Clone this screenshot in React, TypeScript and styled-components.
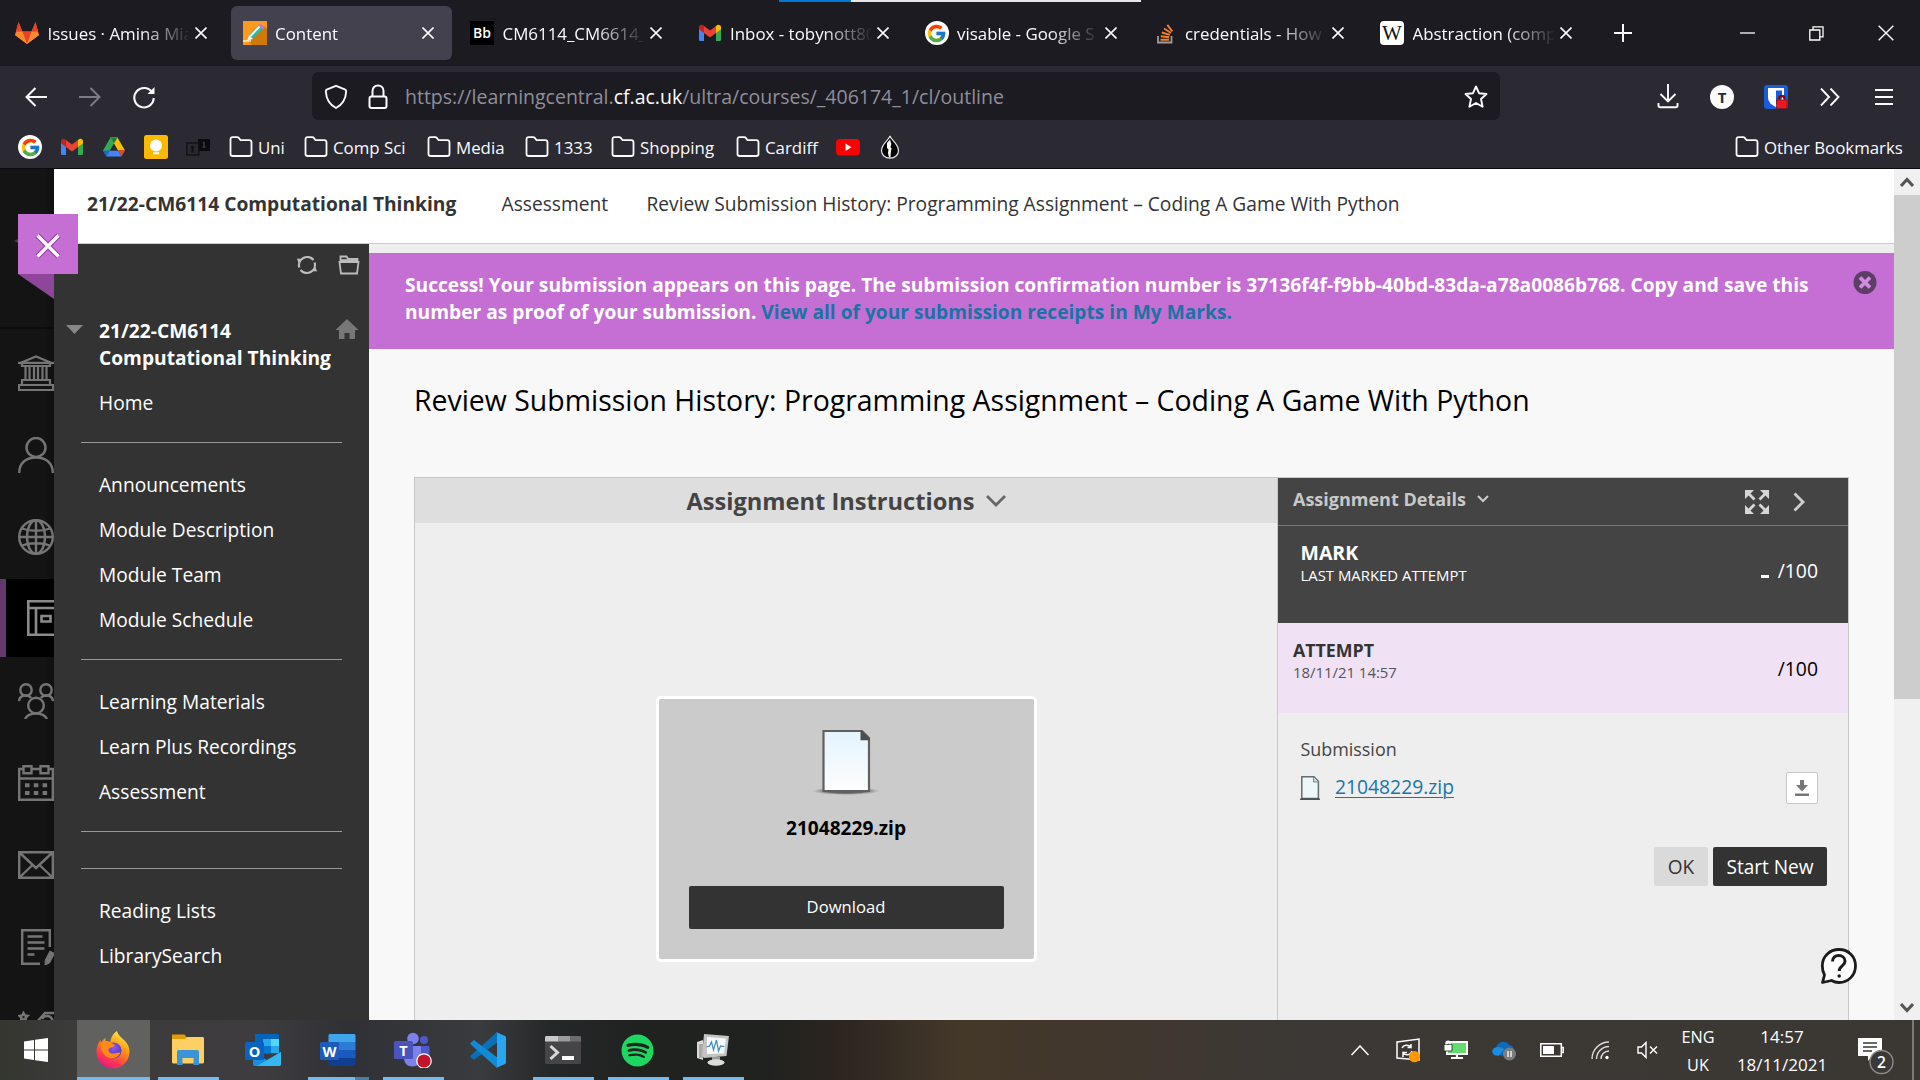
import React from 'react';
import styled, { createGlobalStyle, css } from 'styled-components';
import { FcGoogle } from 'react-icons/fc';
import { FaSpotify } from 'react-icons/fa';

const Global = createGlobalStyle`
  * { box-sizing: border-box; }
  html, body { margin: 0; padding: 0; overflow: hidden; background: #000; }
  body { font-family: "Open Sans", "Noto Sans", sans-serif; }
  svg { display: block; flex: none; }
`;

const Screen = styled.div`
  width: 1920px;
  height: 1080px;
  display: flex;
  flex-direction: column;
  overflow: hidden;
`;

/* ---------- browser chrome ---------- */

const TabBar = styled.div`
  position: relative;
  height: 66px;
  flex: none;
  display: flex;
  align-items: center;
  background: #1c1b22;
`;

const LoadStrip = styled.div`
  position: absolute;
  top: 0;
  left: 779px;
  width: 362px;
  height: 2px;
  background: linear-gradient(to right, #0078d7 72px, #e6e6e6 72px);
`;

const Tab = styled.div<{ $active?: boolean }>`
  width: 221.5px;
  height: 54px;
  margin: 0 3px;
  padding: 0 17px 0 12px;
  display: flex;
  align-items: center;
  border-radius: 6px;
  background: ${(p) => (p.$active ? '#42414d' : 'transparent')};
`;

const TabLabel = styled.span`
  width: 145px;
  margin-left: 8.500px;
  padding-top: 1px;
  overflow: hidden;
  white-space: nowrap;
  color: #fbfbfe;
  font-size: 16.9px;
  line-height: 26px;
  mask-image: linear-gradient(to right, #000 92px, transparent 143px);
`;

const TabClose = styled.span`
  margin-left: auto;
  margin-right: -5px;
  width: 24px;
  display: flex;
  justify-content: center;
`;

const PlusCell = styled.span`
  width: 60px;
  display: flex;
  justify-content: center;
`;

const WindowButtons = styled.div`
  margin-left: auto;
  display: flex;
`;

const WindowButton = styled.div`
  width: 69px;
  height: 66px;
  display: flex;
  align-items: center;
  justify-content: center;
`;

const NavBar = styled.div`
  height: 60px;
  flex: none;
  display: flex;
  align-items: center;
  background: #2b2a33;
`;

const NavButton = styled.div`
  width: 54px;
  height: 48px;
  padding-top: 1px;
  display: flex;
  align-items: center;
  justify-content: center;
`;

const UrlBar = styled.div`
  width: 1188px;
  height: 48px;
  margin-left: 141px;
  padding: 1px 12px 0;
  display: flex;
  align-items: center;
  border-radius: 6px;
  background: #1c1b22;
`;

const UrlText = styled.span`
  margin-left: 17px;
  padding-top: 1px;
  flex: 1;
  color: #8f8f9a;
  font-size: 19.5px;
  line-height: 30px;
  b { color: #fbfbfe; font-weight: 400; }
`;

const Gap = styled.span<{ $w: number }>`
  width: ${(p) => p.$w}px;
  flex: none;
`;

const Avatar = styled.span`
  width: 24px;
  height: 24px;
  border-radius: 50%;
  background: #fbfbfe;
  color: #2b2a33;
  display: flex;
  align-items: center;
  justify-content: center;
  font-size: 15px;
  font-weight: 700;
`;

const Bookmarks = styled.div`
  height: 43px;
  flex: none;
  display: flex;
  align-items: center;
  padding: 0 17px 0 18px;
  background: #2b2a33;
  border-bottom: 1px solid #0c0c0d;
`;

const SiteMark = styled.span`
  width: 24px;
  height: 24px;
  margin-right: 18px;
  display: flex;
  align-items: center;
  justify-content: center;
`;

const FolderItem = styled.span<{ $w: number }>`
  width: ${(p) => p.$w}px;
  display: flex;
  align-items: center;
  color: #fbfbfe;
  font-size: 16.85px;
  line-height: 27px;
  white-space: nowrap;
  svg { margin-right: 5px; }
`;

const GoogleDisc = styled.span`
  width: 24px;
  height: 24px;
  border-radius: 50%;
  background: #fff;
  display: flex;
  align-items: center;
  justify-content: center;
`;

const Tile = styled.span<{ $bg: string; $fg?: string; $serif?: boolean }>`
  width: 24px;
  height: 24px;
  flex: none;
  display: flex;
  align-items: center;
  justify-content: center;
  border-radius: ${(p) => (p.$serif ? 4 : 0)}px;
  background: ${(p) => p.$bg};
  color: ${(p) => p.$fg ?? '#fff'};
  font: ${(p) => (p.$serif ? '400 21px/24px "Liberation Serif", serif' : '600 14px/24px "Open Sans", sans-serif')};
`;

/* ---------- page ---------- */

const Page = styled.div`
  position: relative;
  height: 851px;
  flex: none;
  display: flex;
  background: #f8f8f8;
`;

const Rail = styled.div`
  width: 54px;
  height: 851px;
  overflow: hidden;
  background: linear-gradient(to right, #141414 44px, #0f0f0f 54px);
`;

const RailTop = styled.div`
  height: 160px;
  margin-bottom: 3px;
  padding: 66px 0 0 14px;
  border-bottom: 2px solid #0c0c0c;
`;

const RailItem = styled.div`
  height: 82px;
  padding-left: 18px;
  display: flex;
  align-items: center;
`;

const RailActive = styled.div`
  width: 54px;
  height: 78px;
  margin: 1px 0 3px;
  padding-left: 21px;
  display: flex;
  align-items: center;
  overflow: hidden;
  background: #000;
  border-left: 6px solid #64396e;
`;

const Ribbon = styled.div`
  position: absolute;
  left: 18px;
  top: 45px;
  width: 60px;
  height: 60px;
  padding-top: 4px;
  display: flex;
  align-items: center;
  justify-content: center;
  background: #c56fd5;
`;

const RibbonFold = styled.div`
  position: absolute;
  left: 18px;
  top: 105px;
  width: 36px;
  height: 25px;
  background: #8d4699;
  clip-path: polygon(0 0, 100% 0, 100% 100%);
`;

const Body = styled.div`
  flex: 1;
  display: flex;
  flex-direction: column;
`;

const Crumbs = styled.div`
  height: 75px;
  flex: none;
  padding: 0 0 6px 33px;
  display: flex;
  align-items: center;
  background: #fff;
  border-bottom: 1px solid #ccc;
  color: #333;
  font-size: 19.2px;
  line-height: 27px;
  white-space: nowrap;
`;

const Crumb = styled.span<{ $w?: number; $bold?: boolean }>`
  width: ${(p) => (p.$w ? `${p.$w}px` : 'auto')};
  font-weight: ${(p) => (p.$bold ? 700 : 400)};
`;

const Columns = styled.div`
  flex: 1;
  display: flex;
`;

const Sidebar = styled.nav`
  width: 315px;
  height: 776px;
  flex: none;
  background: #333;
  color: #fff;
  font-size: 19.18px;
  line-height: 27px;
`;

const SideTools = styled.div`
  height: 72px;
  padding: 11px 9px 0 0;
  display: flex;
  justify-content: flex-end;
  gap: 21px;
`;

const SideTitle = styled.div`
  height: 63px;
  padding-left: 12px;
  display: flex;
  font-weight: 700;
`;

const SideTitleText = styled.div`
  width: 236px;
  margin-left: 16px;
  padding-top: 1px;
`;

const SideLink = styled.div`
  height: 45px;
  padding-left: 45px;
  line-height: 47px;
`;

const SideRule = styled.div<{ $apart?: boolean }>`
  height: 1px;
  margin: ${(p) => (p.$apart ? 36 : 18)}px 27px 18px;
  background: #999;
`;

const Main = styled.main`
  flex: 1;
  display: flex;
  flex-direction: column;
  border-top: 9px solid #eee;
`;

const Banner = styled.div`
  height: 96px;
  flex: none;
  display: flex;
  justify-content: space-between;
  padding: 18px 17px 0 36px;
  background: #c56fd5;
  color: #fff;
  font-size: 19.18px;
  font-weight: 700;
  line-height: 27px;
`;

const BannerText = styled.div`
  width: 1425px;
  a { color: #1874a4; }
`;

const Title = styled.h1`
  height: 40px;
  margin: 31px 0 57px 45px;
  font-size: 28.430px;
  font-weight: 400;
  line-height: 40px;
  color: #000;
  white-space: nowrap;
`;

const Panel = styled.section`
  flex: 1;
  margin: 0 45px 0 45px;
  display: flex;
  border: 1px solid #c8c8c8;
  border-bottom: none;
  background: #eee;
`;

const Viewer = styled.div`
  width: 862px;
  flex: none;
  display: flex;
  flex-direction: column;
  align-items: center;
`;

const ViewerHead = styled.div`
  width: 100%;
  height: 45px;
  display: flex;
  align-items: center;
  justify-content: center;
  gap: 11px;
  background: #dedede;
  color: #444;
  font-size: 23.65px;
  font-weight: 700;
`;

const FileCard = styled.div`
  width: 381px;
  height: 266px;
  margin-top: 173px;
  padding-top: 30px;
  display: flex;
  flex-direction: column;
  align-items: center;
  border: 3px solid #fff;
  border-radius: 5px;
  background: #cbcbcb;
`;

const FileName = styled.div`
  margin-top: 20px;
  color: #000;
  font-size: 19.1px;
  font-weight: 700;
  line-height: 27px;
`;

const Download = styled.div`
  width: 315px;
  height: 43px;
  margin-top: 44px;
  border-radius: 2px;
  background: #333;
  color: #fff;
  font-size: 16.65px;
  line-height: 41px;
  text-align: center;
`;

const Details = styled.div`
  flex: 1;
  display: flex;
  flex-direction: column;
  border-left: 1px solid #c8c8c8;
`;

const DetailsHead = styled.div`
  height: 48px;
  padding: 0 43px 5px 15px;
  display: flex;
  align-items: center;
  background: #444;
  border-bottom: 1px solid #777;
  color: #c8c8c8;
  font-size: 18px;
  font-weight: 700;
  > svg:first-of-type { margin-left: 11px; }
`;

const HeadActions = styled.span`
  margin: 6px 0 0 auto;
  display: flex;
  align-items: center;
  gap: 24px;
`;

const ScoreRow = styled.div<{ $kind: 'mark' | 'attempt' }>`
  display: flex;
  justify-content: space-between;
  line-height: 22px;
  ${(p) =>
    p.$kind === 'mark'
      ? css`
          height: 97px;
          padding: 16px 30px 0 22.500px;
          background: #444;
          color: #fff;
        `
      : css`
          height: 90px;
          padding: 16px 30px 0 15px;
          background: #f1e1f5;
          color: #333;
        `}
`;

const ScoreName = styled.div<{ $size: number }>`
  font-size: ${(p) => p.$size}px;
  font-weight: 700;
`;

const ScoreNote = styled.div<{ $color: string }>`
  color: ${(p) => p.$color};
  font-size: 14.9px;
`;

const ScoreValue = styled.div<{ $color: string; $drop: number }>`
  padding-top: ${(p) => p.$drop}px;
  display: flex;
  align-items: center;
  color: ${(p) => p.$color};
  font-size: 19.35px;
  line-height: 22px;
  height: ${(p) => p.$drop + 22}px;
`;

const Dash = styled.span`
  width: 8px;
  height: 3px;
  margin: 11px 9px 0 0;
  background: #fff;
`;

const SubmissionLabel = styled.div`
  margin: 23px 0 0 22.500px;
  color: #444;
  font-size: 17.9px;
  line-height: 26px;
`;

const FileRow = styled.div`
  height: 32px;
  margin: 10px 30px 0 22px;
  display: flex;
  align-items: center;
  a {
    margin: -2px 0 0 15px;
    color: #1a75a7;
    font-size: 19.3px;
    line-height: 28px;
    text-decoration: underline;
    text-decoration-thickness: 1px;
    text-underline-offset: 3px;
  }
`;

const SaveButton = styled.span`
  width: 32px;
  height: 32px;
  margin-left: auto;
  display: flex;
  align-items: center;
  justify-content: center;
  border: 1px solid #c8c8c8;
  border-radius: 2px;
  background: #fff;
`;

const Actions = styled.div`
  margin: 43px 21px 0 0;
  display: flex;
  justify-content: flex-end;
  gap: 5px;
`;

const Action = styled.div<{ $dark?: boolean }>`
  width: ${(p) => (p.$dark ? 114 : 54)}px;
  height: 39px;
  border-radius: 2px;
  background: ${(p) => (p.$dark ? '#333' : '#dadada')};
  color: ${(p) => (p.$dark ? '#fff' : '#333')};
  font-size: 19.05px;
  line-height: 41px;
  text-align: center;
`;

const HelpBubble = styled.div`
  position: absolute;
  left: 1820px;
  top: 778px;
`;

const ScrollTrack = styled.div`
  width: 26px;
  flex: none;
  display: flex;
  flex-direction: column;
  align-items: center;
  background: #f0f0f0;
`;

const ScrollCap = styled.div<{ $low?: boolean }>`
  height: 26px;
  padding-top: ${(p) => (p.$low ? 2 : 0)}px;
  display: flex;
  align-items: center;
`;

const ScrollThumb = styled.div`
  width: 26px;
  height: 504px;
  margin-bottom: auto;
  background: #cdcdcd;
`;

/* ---------- taskbar ---------- */

const Taskbar = styled.div`
  height: 60px;
  flex: none;
  display: flex;
  background: linear-gradient(to right, #34362f 0, #3c3b3b 75px, #3e3c3e 260px, #2f3136 350px, #3a3b3e 480px, #252829 550px, #1f221f 640px, #20221f 760px, #2a2420 830px, #443829 960px, #42372d 1080px, #3b3835 1300px, #3b3834 1920px);
`;

const StartCell = styled.div`
  width: 77px;
  padding-right: 5px;
  display: flex;
  align-items: center;
  justify-content: center;
`;

const AppCell = styled.div<{ $active?: boolean }>`
  width: 73px;
  margin-right: 2px;
  display: flex;
  flex-direction: column;
  align-items: center;
  justify-content: space-between;
  background: ${(p) => (p.$active ? '#616160' : 'transparent')};
`;

const AppIcon = styled.span`
  height: 57px;
  padding: 3px 2px 0 0;
  display: flex;
  align-items: center;
`;

const RunLine = styled.span<{ $mode: 'full' | 'run' | 'many' | 'none' }>`
  width: ${(p) => (p.$mode === 'full' ? 73 : 61)}px;
  height: 3px;
  background: ${(p) =>
    p.$mode === 'none'
      ? 'transparent'
      : p.$mode === 'many'
        ? 'linear-gradient(to right, #76b9ed 47px, #4f7da1 47px)'
        : '#76b9ed'};
`;

const Tray = styled.div`
  margin-left: auto;
  display: flex;
  color: #fff;
  line-height: 28px;
`;

const TrayCell = styled.div`
  width: 48px;
  display: flex;
  align-items: center;
  justify-content: center;
`;

const TrayText = styled.div<{ $w: number; $size: number }>`
  width: ${(p) => p.$w}px;
  padding: 3px 2px 0 0;
  font-size: ${(p) => p.$size}px;
  text-align: center;
`;

const Notice = styled.div`
  width: 72px;
  padding: 17px 0 0 17px;
`;

const PeekEdge = styled.div`
  width: 8px;
  border-left: 2px solid #7c7a77;
`;

/* ---------- icons ---------- */

const X = ({ s = 12, w = 1.6, c = '#fbfbfe' }) => (
  <svg width={s} height={s} viewBox="0 0 12 12" stroke={c} strokeWidth={(w * 12) / s} fill="none">
    <path d="M.5.5l11 11M11.5.5l-11 11" />
  </svg>
);

const Gmail = () => (
  <svg width="24" height="24" viewBox="0 0 24 24">
    <path d="M1 6.5v12c0 .9.7 1.6 1.6 1.6H6V10z" fill="#4285f4" />
    <path d="M23 6.500v12c0 .9-.7 1.600-1.600 1.600H18V10z" fill="#34a853" />
    <path d="M1 6.300C1 4 3.500 3 5.200 4.300L6 5v7L1 8.200z" fill="#c5221f" />
    <path d="M23 6.300C23 4 20.500 3 18.800 4.300L18 5v7l5-3.800z" fill="#fbbc04" />
    <path d="M6 5l6 4.600L18 5v7l-6 4.500L6 12z" fill="#ea4335" />
  </svg>
);

const GitLab = () => (
  <svg width="24" height="24" viewBox="1 0 24 24">
    <path d="M13 23L1 14 4.500 1l4 9.500h9l4-9.500L25 14z" fill="#fc6d26" />
    <path d="M13 23L8.200 10.500h9.600z" fill="#e24329" />
    <path d="M1 14l2.300-3.500h5L13 23zM25 14l-2.300-3.500h-5L13 23z" fill="#fc8a2b" />
    <path d="M8.300 10.500H2L4.500 1zM17.700 10.500H24L21.500 1z" fill="#e24329" />
  </svg>
);

const Pencil = () => (
  <svg width="24" height="24" viewBox="0 0 24 24">
    <path d="M0 0h24v24H0z" fill="#fb9a1c" />
    <path d="M21 5l3 3v16H9l-4-4z" fill="#cf7a08" />
    <path d="M4.500 19.500l1.500-5.500 10-10 4 3.500-10 10z" fill="#2fb7a8" />
    <path d="M6.500 14.500L16 4.500l1.500 1.400-9.500 10z" fill="#e2f4f0" />
    <path d="M15.500 4.500l2-2 4.300 4-2 2.200z" fill="#c17bc4" />
    <path d="M4 20l2.200-6 3.700 4z" fill="#fff0d8" />
    <path d="M0 20h8" stroke="#fff" strokeWidth="1.200" />
  </svg>
);

const StackOverflow = () => (
  <svg width="24" height="24" viewBox="0 0 24 24" fill="none">
    <path d="M5 15v6.500h13.500V15" stroke="#9a9ca0" strokeWidth="1.800" />
    <g stroke="#f48024" strokeWidth="1.900">
      <path d="M7.500 18.700h8.500M7.800 15.300l8.400.9M8.800 11.500l8 2.300M11 7.500l7 4.500M14.300 3.800l5 6.500" />
    </g>
  </svg>
);

const Drive = () => (
  <svg width="24" height="24" viewBox="0 0 24 24">
    <path d="M8.500 2.500h7L12 8.500 4.500 21.500 1 15.500z" fill="#34a853" />
    <path d="M8.500 2.500h7l7.500 13h-7z" fill="#fbbc04" />
    <path d="M1 15.500h6.800L4.500 21.500z" fill="#1a66d6" />
    <path d="M4.500 21.500L8 15.500h8l3.500 6z" fill="#4285f4" />
    <path d="M16 15.500h7l-3.500 6z" fill="#ea4335" />
    <path d="M8.500 2.500h7L12 8.500z" fill="#188038" />
    <path d="M12 9l3.700 6.500H8.300z" fill="#2b2a33" />
  </svg>
);

const Keep = () => (
  <svg width="24" height="24" viewBox="0 0 24 24">
    <rect width="24" height="24" rx="2.500" fill="#fdb900" />
    <circle cx="12" cy="10.500" r="6" fill="#fff" />
    <path d="M9 13h6v3H9zM9 17.200h6v2H9z" fill="#fff" />
  </svg>
);

const Dice = () => (
  <svg width="24" height="24" viewBox="0 0 24 24">
    <rect x="12" y="4" width="12" height="12" fill="#0b0b0d" />
    <rect x=".8" y="8" width="12" height="12" fill="#29282f" stroke="#131317" strokeWidth="1.500" />
    <path d="M6.500 11.500v6M5 12h3" stroke="#111115" strokeWidth="2" />
    <path d="M18 7v5M16.500 12h3M16.800 7.500H18" stroke="#3c3b45" strokeWidth="1.500" fill="none" />
  </svg>
);

const Folder = () => (
  <svg width="24" height="24" viewBox="0 0 24 24" fill="none" stroke="#fbfbfe" strokeWidth="1.800">
    <path d="M1.500 19V4.500c0-1.400 1-2.300 2.300-2.300h4.400c.8 0 1.300.3 1.800.9l1.600 2.100h8.600c1.300 0 2.300 1 2.300 2.300V19c0 1.200-1 2-2.300 2H3.800c-1.300 0-2.300-.8-2.300-2z" />
  </svg>
);

const YouTube = () => (
  <svg width="24" height="24" viewBox="0 0 24 24">
    <rect y="4" width="24" height="16.500" rx="4" fill="#f00" />
    <path d="M9.500 8.500l6 3.700-6 3.700z" fill="#fff" />
  </svg>
);

const Drop = () => (
  <svg width="20" height="24" viewBox="0 0 20 24">
    <path d="M10 1C9 5 1.500 9 1.500 15.500 1.500 20 5 23.200 10 23.200s8.500-3.200 8.500-7.700C18.500 9 11 5 10 1z" fill="#000" stroke="#e8e8e8" strokeWidth="1.200" />
    <path d="M10 4.500L7 8v5l1.500 1.500L8 18l1 4.500h1.500l.3-5 .7-4-1-1.500.8-3z" fill="#fff" />
  </svg>
);

const Shield = () => (
  <svg width="24" height="26" viewBox="0 0 24 26" fill="none" stroke="#fbfbfe" strokeWidth="1.900" strokeLinejoin="round">
    <path d="M12 1.800l8.800 3.500c1 .4 1.500 1 1.400 2C21.800 14.500 19 20.500 12 24 5 20.500 2.200 14.500 1.800 7.300c0-1 .4-1.600 1.400-2z" />
  </svg>
);

const Lock = () => (
  <svg width="20" height="26" viewBox="0 0 20 26" fill="none" stroke="#fbfbfe" strokeWidth="2">
    <rect x="1.500" y="12.500" width="17" height="11.500" rx="2" />
    <path d="M4.500 12V7c0-3.300 2.300-5.500 5.500-5.500S15.500 3.700 15.500 7v5" />
  </svg>
);

const BankIcon = () => (
  <svg width="36" height="36" viewBox="0 0 36 36" fill="none" stroke="#757575" strokeWidth="2.200">
    <path d="M1 8.500L18 1.500l17 7M0 7.800h36M4 8v3h28V8M7.500 12v13M11.500 12v13M16 12v13M20 12v13M24.500 12v13M28.500 12v13M4 29v-4h28v4M1 35v-5h34v5z" />
  </svg>
);
const PersonIcon = () => (
  <svg width="36" height="36" viewBox="0 0 36 36" fill="none" stroke="#757575" strokeWidth="2.400">
    <circle cx="18" cy="10.500" r="9.500" />
    <path d="M1.200 36C1.200 26 8 20.500 18 20.500S34.800 26 34.800 36" />
  </svg>
);
const GlobeIcon = () => (
  <svg width="36" height="36" viewBox="0 0 36 36" fill="none" stroke="#757575" strokeWidth="2.400">
    <circle cx="18" cy="18" r="16.800" />
    <ellipse cx="18" cy="18" rx="9" ry="16.800" />
    <path d="M18 1v34M1 18h34M4 9.500c8 3 20 3 28 0M4 26.500c8-3 20-3 28 0" />
  </svg>
);
const BookIcon = () => (
  <svg width="36" height="36" viewBox="0 0 36 36" fill="none" stroke="#8a8a8a" strokeWidth="2.600">
    <path d="M1.300 1.300h36v33.400h-36zM1 8h36M9 8v26" />
    <path d="M14.500 16h9v5.500h-9z" />
  </svg>
);
const GroupIcon = () => (
  <svg width="36" height="36" viewBox="0 0 36 36" fill="none" stroke="#757575" strokeWidth="2.400">
    <circle cx="8" cy="7" r="5.700" />
    <circle cx="28" cy="7" r="5.700" />
    <circle cx="18" cy="22.500" r="7.800" />
    <path d="M1 18c.5-4 3-5.500 7-5.500 2.500 0 4 .8 5 2.500M35 18c-.5-4-3-5.500-7-5.500-2.500 0-4 .8-5 2.500M7 36c2-4 6-5.500 11-5.500s9 1.500 11 5.500" />
  </svg>
);
const CalendarIcon = () => (
  <svg width="36" height="36" viewBox="0 0 36 36" fill="none" stroke="#757575" strokeWidth="2.400">
    <path d="M5 4H1.200v30.800h33.600V4H31M14 4h8M1 13.500h34M5.500 1.200h8v7h-8zM22.500 1.200h8v7h-8z" />
    <path d="M7 20.200h4.500M15.800 20.200h4.500M24.600 20.200h4.500M7 28h4.500M15.800 28h4.500M24.600 28h4.500" strokeWidth="4" />
  </svg>
);
const MailIcon = () => (
  <svg width="36" height="28" viewBox="0 0 36 28" fill="none" stroke="#757575" strokeWidth="2.400">
    <path d="M1.200 1.200h33.600v25.600H1.200zM2 2l16 15L34 2M2 26l12.500-12M34 26L21.500 14" />
  </svg>
);
const GradesIcon = () => (
  <svg width="36" height="36" viewBox="0 0 36 36" fill="none" stroke="#757575" strokeWidth="2.400">
    <path d="M22 34.800H4.200V1.200h27.600V18" />
    <path d="M9.500 7.500h15M9.500 13.500h17M9.500 19.500h17M9.500 25.500h7" />
    <path d="M32 22l4.500 2.500-5 9.500-4.500 2 .3-5z" fill="#757575" strokeWidth="1" />
  </svg>
);
const ToolsIcon = () => (
  <svg width="36" height="36" viewBox="0 0 36 36" fill="none" stroke="#757575" strokeWidth="2.400">
    <path d="M5.500 2l1.300 2.500 2.700.4-2 2 .5 3-2.500-1.400L3 9.900l.5-3-2-2 2.700-.4zM18 12L27 2h9M24 8c2-4 8-4 10 0s-1 8-4 8" />
  </svg>
);

const PageIcon = () => (
  <svg width="68" height="66" viewBox="0 0 68 66">
    <defs>
      <linearGradient id="sheet" x1="0" y1="0" x2="0" y2="1">
        <stop offset="0" stopColor="#e4f3fd" />
        <stop offset="1" stopColor="#fdfeff" />
      </linearGradient>
      <radialGradient id="shade">
        <stop offset="0" stopColor="#444" />
        <stop offset=".6" stopColor="#555" stopOpacity=".8" />
        <stop offset="1" stopColor="#888" stopOpacity="0" />
      </radialGradient>
    </defs>
    <ellipse cx="34" cy="62" rx="34" ry="4" fill="url(#shade)" />
    <path d="M11.500 2H50l7 7v53H11.500z" fill="url(#sheet)" stroke="#606060" strokeWidth="2.200" />
    <path d="M48.500 2H50l7.500 7.500v1.700h-9z" fill="#4c4c4c" />
  </svg>
);

const SmallPage = () => (
  <svg width="20" height="24" viewBox="0 0 20 24">
    <path d="M1.800.8H14l4.400 4.400v17.300H1.800z" fill="#eef7f7" stroke="#5f6e6e" strokeWidth="1.500" />
    <path d="M13.500 1v5h5" fill="#cfd8d8" stroke="#7d8a8a" strokeWidth="1" />
    <path d="M0 23.200h20" stroke="#333" strokeWidth="1.200" />
  </svg>
);

const Chevron = ({ w = 18, h = 10, c = '#666', s = 2.8 }) => (
  <svg width={w} height={h} viewBox={`0 0 ${w} ${h}`} fill="none" stroke={c} strokeWidth={s}>
    <path d={`M1 1L${w / 2} ${h - 2}L${w - 1} 1`} />
  </svg>
);

const FirefoxLogo = () => (
  <svg width="34" height="38" viewBox="1 0 34 38">
    <defs>
      <linearGradient id="ffx" x1=".8" y1="0" x2=".3" y2="1">
        <stop offset="0" stopColor="#fff44f" />
        <stop offset=".4" stopColor="#ff980e" />
        <stop offset=".75" stopColor="#ff3b4e" />
        <stop offset="1" stopColor="#e31587" />
      </linearGradient>
      <radialGradient id="ffp" cx=".5" cy=".3">
        <stop offset="0" stopColor="#9059ff" />
        <stop offset="1" stopColor="#5b3bc4" />
      </radialGradient>
    </defs>
    <path d="M22 0c1 4 4 6 7 9 3.500 3 5.500 7 5.500 11.500C34.500 30 27 37.500 18 37.500S1.500 30 1.500 21c0-5 1.500-9 4-12l.5 3c1-2 2.500-4 4.500-5v3c2 0 3 0 5 1 0-4 2.500-8.500 6.500-11z" fill="url(#ffx)" />
    <circle cx="18.500" cy="19.500" r="8" fill="url(#ffp)" />
    <path d="M5 13c4-3 7-3 10.500-1.500L20 14c-1 2-4 2.200-5.500 3-2 1.500-1 5 3 5.500 3 .4 5-1.500 8-1-2 5-6.500 6.500-10.500 5.500C9 25.500 6 20 5 13z" fill="#ff8b16" />
  </svg>
);

const ExplorerLogo = () => (
  <svg width="32" height="38" viewBox="0 0 32 38">
    <path d="M0 3.500h12.500L15 7v3H0z" fill="#e09c00" />
    <path d="M0 8h13l2-2h15.500c.8 0 1.500.7 1.500 1.500V31c0 .8-.7 1.500-1.500 1.500h-29C.7 32.500 0 31.800 0 31z" fill="#fdd063" />
    <path d="M5 34V21c0-1.500 1-2 2-2h18c1.500 0 2 .8 2 2v13h-5.500v-7h-11v7z" fill="#3c94d8" />
  </svg>
);

const OfficeBadge = ({ fill, letter }: { fill: string; letter: string }) => (
  <>
    <rect x="0" y="9" width="19" height="18" rx="1.500" fill={fill} />
    <text x="9.500" y="23.500" fill="#fff" fontSize="14.500" fontWeight="700" textAnchor="middle" fontFamily="Open Sans">{letter}</text>
  </>
);

const OutlookLogo = () => (
  <svg width="36" height="34" viewBox="0 0 36 34">
    <path d="M10 1h24v20H10z" fill="#0364b8" />
    <path d="M18 6h8v7h-8z" fill="#28a8ea" />
    <path d="M26 6h8v7h-8z" fill="#50d9ff" />
    <path d="M18 13h8v7h-8z" fill="#0078d4" />
    <path d="M26 13h8v7h-8z" fill="#28a8ea" />
    <path d="M8 19l14 8 14-8v12c0 1.200-.8 2-2 2H10c-1.200 0-2-.8-2-2z" fill="#1490df" />
    <path d="M36 19v12c0 1.200-.8 2-2 2H12z" fill="#35b8f1" />
    <OfficeBadge fill="#0a63c0" letter="O" />
  </svg>
);

const WordLogo = () => (
  <svg width="36" height="34" viewBox="0 0 36 34">
    <path d="M10 1h24c.8 0 1.500.7 1.500 1.500V9H8.500V2.500C8.500 1.700 9.200 1 10 1z" fill="#41a5ee" />
    <path d="M8.500 9h27v8h-27z" fill="#2b7cd3" />
    <path d="M8.500 17h27v8h-27z" fill="#185abd" />
    <path d="M8.500 25h27v6.500c0 .8-.7 1.500-1.500 1.500H10c-.8 0-1.500-.7-1.500-1.500z" fill="#103f91" />
    <OfficeBadge fill="#1c5bbd" letter="W" />
  </svg>
);

const TeamsLogo = () => (
  <svg width="38" height="36" viewBox="0 0 38 36">
    <circle cx="19" cy="6.500" r="5.800" fill="#7b83eb" />
    <circle cx="30" cy="8" r="4" fill="#5059c9" />
    <path d="M22 14h12c.8 0 1.500.7 1.500 1.500V24c0 4-3 7-7 7z" fill="#5059c9" />
    <path d="M10 14h17v12c0 5-3.500 8.500-8.500 8.500S10 31 10 26z" fill="#7b83eb" />
    <OfficeBadge fill="#4b53bc" letter="T" />
    <circle cx="30" cy="29" r="7.200" fill="#c4142b" stroke="#fff" strokeWidth="1.200" />
  </svg>
);

const CodeLogo = () => (
  <svg width="36" height="36" viewBox="0 0 36 36">
    <path d="M27 0L.8 23.500c-.6.600-.6 1.300 0 1.800l2.300 2c.6.500 1.200.5 1.800 0L28 10z" fill="#0a6fb5" />
    <path d="M27 36L.8 12.500c-.6-.6-.6-1.300 0-1.800l2.300-2c.6-.5 1.200-.5 1.800 0L28 26z" fill="#128bd6" />
    <path d="M26 0l9 4c.6.300 1 .8 1 1.500v25c0 .7-.4 1.200-1 1.500l-9 4c1-.5 1-1 1-2V2c0-1 0-1.500-1-2z" fill="#2aa5f0" />
  </svg>
);

const TerminalLogo = () => (
  <svg width="36" height="28" viewBox="0 0 36 28">
    <rect width="36" height="28" rx="1.500" fill="#454547" />
    <path d="M0 1.500C0 .7.700 0 1.500 0H13v5.500H0z" fill="#c9c9c9" />
    <path d="M13 0h12v5.500H13z" fill="#9b9b9b" />
    <path d="M25 0h9.500c.8 0 1.500.7 1.500 1.500v4H25z" fill="#6c6c6c" />
    <path d="M5.500 10l7 6.500-7 6.500" fill="none" stroke="#d8d8d8" strokeWidth="3" />
    <rect x="17" y="20" width="12" height="4" fill="#fff" />
  </svg>
);

const MonitorLogo = () => (
  <svg width="34" height="32" viewBox="0 0 34 32">
    <path d="M1 8l6-2v20l-6-2z" fill="#d9d9d9" />
    <path d="M3 10h4v14H3z" fill="#aaa" />
    <path d="M8 0l25 2-2.500 20L8 24 6 22z" fill="#c4c4c2" />
    <path d="M11 3l19 1.500-2 15L11 20z" fill="#f5f9fb" />
    <path d="M10.500 13l3-1 2-4 2 8 3-10 2 11 2-5 4 .5" fill="none" stroke="#3c8bb8" strokeWidth="1.200" />
    <path d="M16 23h8v4h-8z" fill="#9c9c9c" />
    <ellipse cx="20" cy="28.500" rx="8.500" ry="3.200" fill="#dcdcdc" />
  </svg>
);

/* ---------- data ---------- */

const tabs: { icon: React.ReactNode; label: string; active?: boolean }[] = [
  { icon: <GitLab />, label: 'Issues · Amina Mia' },
  { icon: <Pencil />, label: 'Content', active: true },
  { icon: <Tile $bg="#000">Bb</Tile>, label: 'CM6114_CM6614_' },
  { icon: <Gmail />, label: 'Inbox - tobynott80' },
  { icon: <GoogleDisc><FcGoogle size={21} /></GoogleDisc>, label: 'visable - Google S' },
  { icon: <StackOverflow />, label: 'credentials - How' },
  { icon: <Tile $bg="#fff" $fg="#111" $serif>W</Tile>, label: 'Abstraction (comp' },
];

const folders: [string, number][] = [
  ['Uni', 75],
  ['Comp Sci', 123],
  ['Media', 98],
  ['1333', 86],
  ['Shopping', 125],
  ['Cardiff', 100],
];

const menu = [
  ['Home'],
  ['Announcements', 'Module Description', 'Module Team', 'Module Schedule'],
  ['Learning Materials', 'Learn Plus Recordings', 'Assessment'],
  [],
  ['Reading Lists', 'LibrarySearch'],
];

const apps: { icon: React.ReactNode; mode: 'full' | 'run' | 'many' | 'none' }[] = [
  { icon: <FirefoxLogo />, mode: 'full' },
  { icon: <ExplorerLogo />, mode: 'run' },
  { icon: <OutlookLogo />, mode: 'none' },
  { icon: <WordLogo />, mode: 'many' },
  { icon: <TeamsLogo />, mode: 'run' },
  { icon: <CodeLogo />, mode: 'none' },
  { icon: <TerminalLogo />, mode: 'run' },
  { icon: <FaSpotify size={33} color="#1ed760" />, mode: 'run' },
  { icon: <MonitorLogo />, mode: 'run' },
];

const Browser = () => (
  <>
    <TabBar>
      <LoadStrip />
      {tabs.map((t) => (
        <Tab key={t.label} $active={t.active}>
          {t.icon}
          <TabLabel>{t.label}</TabLabel>
          <TabClose><X /></TabClose>
        </Tab>
      ))}
      <PlusCell>
        <svg width="18" height="18" viewBox="0 0 18 18" stroke="#fbfbfe" strokeWidth="2"><path d="M9 0v18M0 9h18" /></svg>
      </PlusCell>
      <WindowButtons>
        <WindowButton><svg width="15" height="2"><path d="M0 1h15" stroke="#fff" strokeWidth="1.300" /></svg></WindowButton>
        <WindowButton>
          <svg width="15" height="15" viewBox="0 0 15 15" fill="none" stroke="#fff" strokeWidth="1.300"><path d="M.8 4h10v10H.8zM4 4V.8h10v10h-3" /></svg>
        </WindowButton>
        <WindowButton><X s={16} w={1.4} /></WindowButton>
      </WindowButtons>
    </TabBar>
    <NavBar>
      <Gap $w={9} />
      <NavButton>
        <svg width="22" height="20" viewBox="0 0 22 20" fill="none" stroke="#fbfbfe" strokeWidth="2"><path d="M22 10H1.500M10.500 1l-9 9 9 9" /></svg>
      </NavButton>
      <NavButton>
        <svg width="22" height="20" viewBox="0 0 22 20" fill="none" stroke="#7c7b84" strokeWidth="2"><path d="M0 10h20.500M11.500 1l9 9-9 9" /></svg>
      </NavButton>
      <NavButton>
        <svg width="24" height="24" viewBox="0 0 24 24" fill="none" stroke="#fbfbfe" strokeWidth="2.100"><path d="M20.500 8A9.700 9.700 0 1 0 21.700 13" /><path d="M22.500 2v7h-7z" fill="#fbfbfe" stroke="none" /></svg>
      </NavButton>
      <UrlBar>
        <Shield />
        <Gap $w={20} />
        <Lock />
        <UrlText>https://learningcentral.<b>cf.ac.uk</b>/ultra/courses/_406174_1/cl/outline</UrlText>
        <svg width="24" height="24" viewBox="0 0 24 24" fill="none" stroke="#fbfbfe" strokeWidth="1.900" strokeLinejoin="round">
          <path d="M12 1.500l3 6.700 7.500.8-5.500 5 1.600 7.800L12 18l-6.600 3.800L7 14 1.500 9 9 8.200z" />
        </svg>
      </UrlBar>
      <Gap $w={141} />
      <NavButton>
        <svg width="22" height="26" viewBox="0 0 22 26" fill="none" stroke="#fbfbfe" strokeWidth="1.900"><path d="M11 0v17M3.500 10l7.500 7.500L18.500 10M1.500 19v2.500c0 1 .8 1.800 1.800 1.800h15.400c1 0 1.800-.8 1.800-1.800V19" /></svg>
      </NavButton>
      <NavButton><Avatar>T</Avatar></NavButton>
      <NavButton>
        <svg width="24" height="24" viewBox="0 0 24 24">
          <rect width="24" height="24" rx="3" fill="#175ddc" />
          <path d="M4 3h16v9c0 5-3.500 8-8 10-4.500-2-8-5-8-10z" fill="#fff" />
          <path d="M12 5.500h6V12c0 3.500-2.500 6-6 7.500z" fill="#175ddc" />
          <path d="M15 14.500v-1c0-1.700 1-2.500 2.700-2.500s2.800.8 2.800 2.500v1" fill="none" stroke="#7c1014" strokeWidth="2.500" />
          <rect x="12.500" y="15" width="10.500" height="8.500" fill="#f01820" stroke="#7c1014" strokeWidth=".7" />
        </svg>
      </NavButton>
      <NavButton>
        <svg width="20" height="18" viewBox="0 0 20 18" fill="none" stroke="#fbfbfe" strokeWidth="1.900"><path d="M1 .5L9 9l-8 8.500M10.500.5l8 8.500-8 8.500" /></svg>
      </NavButton>
      <NavButton>
        <svg width="18" height="16" viewBox="0 0 18 16" stroke="#fbfbfe" strokeWidth="1.800"><path d="M0 1h18M0 8h18M0 15h18" /></svg>
      </NavButton>
    </NavBar>
    <Bookmarks>
      <SiteMark><GoogleDisc><FcGoogle size={21} /></GoogleDisc></SiteMark>
      <SiteMark><Gmail /></SiteMark>
      <SiteMark><Drive /></SiteMark>
      <SiteMark><Keep /></SiteMark>
      <SiteMark><Dice /></SiteMark>
      <Gap $w={1} />
      {folders.map(([name, w]) => (
        <FolderItem key={name} $w={w}><Folder />{name}</FolderItem>
      ))}
      <SiteMark><YouTube /></SiteMark>
      <SiteMark><Drop /></SiteMark>
      <Gap $w={815} />
      <FolderItem $w={168}><Folder />Other Bookmarks</FolderItem>
    </Bookmarks>
  </>
);

const RailNav = () => (
  <Rail>
    <RailTop><svg width="8" height="12" viewBox="0 0 8 12"><path d="M0 6l6-3v6z" fill="#444" /></svg></RailTop>
    <RailItem><BankIcon /></RailItem>
    <RailItem><PersonIcon /></RailItem>
    <RailItem><GlobeIcon /></RailItem>
    <RailActive><BookIcon /></RailActive>
    <RailItem><GroupIcon /></RailItem>
    <RailItem><CalendarIcon /></RailItem>
    <RailItem><MailIcon /></RailItem>
    <RailItem><GradesIcon /></RailItem>
    <RailItem><ToolsIcon /></RailItem>
  </Rail>
);

const CourseMenu = () => (
  <Sidebar>
    <SideTools>
      <svg width="20" height="20" viewBox="0 0 20 20" fill="none" stroke="#bdbdbd" strokeWidth="2.200">
        <path d="M2.300 12.500A8.200 8.200 0 0 1 16.500 5M17.700 7.500A8.200 8.200 0 0 1 3.500 15" />
        <path d="M0 3.500l5 .5-3.500 4zM20 16.500l-5-.5 3.500-4z" fill="#bdbdbd" stroke="none" />
      </svg>
      <svg width="22" height="20" viewBox="0 0 22 20" fill="none" stroke="#bdbdbd" strokeWidth="1.800">
        <path d="M2.500 7V1.500h6l1.500 2.300h9.500V7M1.500 7h19l-1.500 11.500H3z" />
        <path d="M2.500 5.200h17" strokeWidth="2" />
      </svg>
    </SideTools>
    <SideTitle>
      <svg width="17" height="23" viewBox="0 0 17 23"><path d="M0 9h17l-8.500 9z" fill="#888" /></svg>
      <SideTitleText>21/22-CM6114 Computational Thinking</SideTitleText>
      <svg width="24" height="27" viewBox="0 0 24 27"><path d="M12 3l11.500 11H20v9h-5.500v-6h-5v6H4v-9H.5z" fill="#777" /></svg>
    </SideTitle>
    {menu.map((group, i) => (
      <React.Fragment key={i}>
        {i > 0 && <SideRule $apart={menu[i - 1].length === 0} />}
        {group.map((item) => <SideLink key={item}>{item}</SideLink>)}
      </React.Fragment>
    ))}
  </Sidebar>
);

const Submission = () => (
  <Panel>
    <Viewer>
      <ViewerHead>Assignment Instructions<Chevron w={20} h={12} /></ViewerHead>
      <FileCard>
        <PageIcon />
        <FileName>21048229.zip</FileName>
        <Download>Download</Download>
      </FileCard>
    </Viewer>
    <Details>
      <DetailsHead>
        Assignment Details
        <Chevron w={12} h={8} c="#c8c8c8" s={2.2} />
        <HeadActions>
          <svg width="24" height="24" viewBox="0 0 24 24" fill="#d6d6d6" stroke="#d6d6d6" strokeWidth="2.800">
            <path d="M0 0h9L0 9zM24 0v9L15 0zM0 24v-9l9 9zM24 24h-9l9-9z" stroke="none" />
            <path d="M3 3l6.500 6.500M21 3l-6.500 6.500M3 21l6.500-6.500M21 21l-6.500-6.500" />
          </svg>
          <svg width="12" height="20" viewBox="0 0 12 20" fill="none" stroke="#d0d0d0" strokeWidth="2.800"><path d="M1.500 1.500l8.500 8.500-8.500 8.500" /></svg>
        </HeadActions>
      </DetailsHead>
      <ScoreRow $kind="mark">
        <div>
          <ScoreName $size={19.5}>MARK</ScoreName>
          <ScoreNote $color="#fff">LAST MARKED ATTEMPT</ScoreNote>
        </div>
        <ScoreValue $color="#fff" $drop={18}><Dash />/100</ScoreValue>
      </ScoreRow>
      <ScoreRow $kind="attempt">
        <div>
          <ScoreName $size={17.8}>ATTEMPT</ScoreName>
          <ScoreNote $color="#555">18/11/21 14:57</ScoreNote>
        </div>
        <ScoreValue $color="#000" $drop={19}>/100</ScoreValue>
      </ScoreRow>
      <SubmissionLabel>Submission</SubmissionLabel>
      <FileRow>
        <SmallPage />
        <a>21048229.zip</a>
        <SaveButton>
          <svg width="16" height="17" viewBox="0 0 16 17" fill="#777"><path d="M6 0h4v5h4l-6 6.500L2 5h4zM1 13.500h14V16H1z" /></svg>
        </SaveButton>
      </FileRow>
      <Actions>
        <Action>OK</Action>
        <Action $dark>Start New</Action>
      </Actions>
    </Details>
  </Panel>
);

const Tasks = () => (
  <Taskbar>
    <StartCell>
      <svg width="24" height="24" viewBox="0 0 24 24" fill="#fff"><path d="M0 3.400L10 2v9.500H0zM11 1.800L24 0v11.500H11zM0 12.500h10V22L0 20.600zM11 12.500h13V24l-13-1.800z" /></svg>
    </StartCell>
    {apps.map((a, i) => (
      <AppCell key={i} $active={a.mode === 'full'}>
        <AppIcon>{a.icon}</AppIcon>
        <RunLine $mode={a.mode} />
      </AppCell>
    ))}
    <Tray>
      <TrayCell><svg width="18" height="11" viewBox="0 0 18 11" fill="none" stroke="#fff" strokeWidth="1.500"><path d="M.5 10L9 1l8.500 9" /></svg></TrayCell>
      <TrayCell>
        <svg width="24" height="25" viewBox="0 0 24 25" fill="none" stroke="#fff" strokeWidth="1.500">
          <path d="M1 4l22-3v21L1 20z" />
          <path d="M6 10c1.500-3 6-4 9-1V6M15 9.500h-3.500M16 13c-1 4-6 5-9 2v4M7 14.500h4" />
          <circle cx="18.500" cy="18.700" r="5.600" fill="#ff9800" stroke="none" />
        </svg>
      </TrayCell>
      <TrayCell>
        <svg width="24" height="20" viewBox="0 0 24 20">
          <path d="M3 2h20v12H3z" fill="#62dc6c" stroke="#fff" strokeWidth="2" />
          <path d="M13 14v4M7 18h12" stroke="#fff" strokeWidth="2.200" />
          <path d="M0 4.500h8V11H0z" fill="#fff" stroke="#222" strokeWidth=".8" />
          <path d="M2 4.500V3c0-2.500 4-2.500 4 0v1.500" fill="none" stroke="#fff" strokeWidth="1.300" />
        </svg>
      </TrayCell>
      <TrayCell>
        <svg width="24" height="24" viewBox="0 -2 24 24">
          <path d="M5 15.500C-1 15.500-1 8 4 7.500 6 1 14 0 17 5c4 0 5 4 5 6l-6 4.500z" fill="#0f6cbd" />
          <path d="M5 15.500C-1 15.500-1 8 4 7.500c3-1.500 6 0 8 2l-5 6z" fill="#1b8ce0" />
          <circle cx="17.500" cy="14" r="6.500" fill="#7c7c7c" />
          <path d="M16 11v6M19 11v6" stroke="#fff" strokeWidth="1.300" />
        </svg>
      </TrayCell>
      <TrayCell>
        <svg width="24" height="14" viewBox="0 0 24 14" fill="none" stroke="#fff" strokeWidth="1.500"><path d="M.8.8h20.500v12.400H.8zM21.500 4.500h1.700v5h-1.700" /><path d="M3 3h11v8H3z" fill="#fff" stroke="none" /></svg>
      </TrayCell>
      <TrayCell>
        <svg width="19" height="19" viewBox="0 0 19 19" fill="none" stroke="#dedede" strokeWidth="1.400"><path d="M1 18A17 17 0 0 1 18 1M5.500 18A12.500 12.500 0 0 1 18 5.500M10 18a8 8 0 0 1 8-8" /><circle cx="16" cy="16.500" r="1.700" fill="#fff" stroke="none" /></svg>
      </TrayCell>
      <TrayCell>
        <svg width="22" height="18" viewBox="0 0 22 18" fill="none" stroke="#fff" strokeWidth="1.400"><path d="M1 6v6h3.500l4.500 4.500v-15L4.500 6zM13 5.500l7 7M20 5.500l-7 7" /></svg>
      </TrayCell>
      <TrayText $w={54} $size={16.3}>ENG<br />UK</TrayText>
      <TrayText $w={114} $size={17}>14:57<br />18/11/2021</TrayText>
      <Notice>
        <svg width="38" height="38" viewBox="0 0 38 38">
          <path d="M1 1h24v18H15l-4 5v-5H1z" fill="#fff" />
          <path d="M6 6h14M6 10h14M6 14h9" stroke="#3a3733" strokeWidth="1.300" />
          <circle cx="24.500" cy="25" r="11.500" fill="#3a3938" stroke="#8f8d8a" strokeWidth="1.400" />
          <text x="24.500" y="30.500" fill="#fff" fontSize="15.500" fontWeight="600" textAnchor="middle" fontFamily="Open Sans">2</text>
        </svg>
      </Notice>
      <PeekEdge />
    </Tray>
  </Taskbar>
);

export default function App() {
  return (
    <Screen>
      <Global />
      <Browser />
      <Page>
        <RailNav />
        <Body>
          <Crumbs>
            <Crumb $w={414.5} $bold>21/22-CM6114 Computational Thinking</Crumb>
            <Crumb $w={145}>Assessment</Crumb>
            <Crumb>Review Submission History: Programming Assignment – Coding A Game With Python</Crumb>
          </Crumbs>
          <Columns>
            <CourseMenu />
            <Main>
              <Banner>
                <BannerText>
                  Success! Your submission appears on this page. The submission confirmation number is
                  {' '}37136f4f-f9bb-40bd-83da-a78a0086b768. Copy and save this number as proof of your submission.{' '}
                  <a>View all of your submission receipts in My Marks.</a>
                </BannerText>
                <svg width="24" height="24" viewBox="0 0 24 24">
                  <circle cx="12" cy="11.500" r="11.500" fill="#5d3f66" />
                  <path d="M7 6.500l10 10M17 6.500l-10 10" stroke="#d28be0" strokeWidth="3.800" />
                </svg>
              </Banner>
              <Title>Review Submission History: Programming Assignment – Coding A Game With Python</Title>
              <Submission />
            </Main>
          </Columns>
        </Body>
        <ScrollTrack>
          <ScrollCap><svg width="14" height="10" viewBox="0 0 14 10" fill="none" stroke="#555" strokeWidth="3"><path d="M1 9l6-6.500L13 9" /></svg></ScrollCap>
          <ScrollThumb />
          <ScrollCap $low><svg width="14" height="10" viewBox="0 0 14 10" fill="none" stroke="#555" strokeWidth="3"><path d="M1 1l6 6.500L13 1" /></svg></ScrollCap>
        </ScrollTrack>
        <Ribbon>
          <svg width="26" height="26" viewBox="0 0 26 26" fill="none">
            <path d="M2.500 2.500l21 21M23.500 2.500l-21 21" stroke="#a136b4" strokeWidth="5.500" />
            <path d="M2.500 2.500l21 21M23.500 2.500l-21 21" stroke="#fff" strokeWidth="3.300" />
          </svg>
        </Ribbon>
        <RibbonFold />
        <HelpBubble>
          <svg width="38" height="38" viewBox="0 0 38 38" fill="none" stroke="#1c1c1c" strokeWidth="2.800" strokeLinejoin="round">
            <path d="M19 2.500c9.500 0 16.500 7 16.500 16.300S28.500 35.500 19 35.500c-3 0-5.500-.8-7.500-2L2.500 35.500l2-7.500C3 25.500 2.300 22 2.300 18.800 2.300 9.500 9.500 2.500 19 2.500z" fill="#fff" />
            <path d="M12.500 14.500c0-4 3-6 6.300-6s6.200 2.200 6.200 5.700c0 4.800-5.800 4.600-5.800 9.800" strokeWidth="3" />
            <circle cx="19.200" cy="29" r="1.800" fill="#1c1c1c" stroke="none" />
          </svg>
        </HelpBubble>
      </Page>
      <Tasks />
    </Screen>
  );
}
